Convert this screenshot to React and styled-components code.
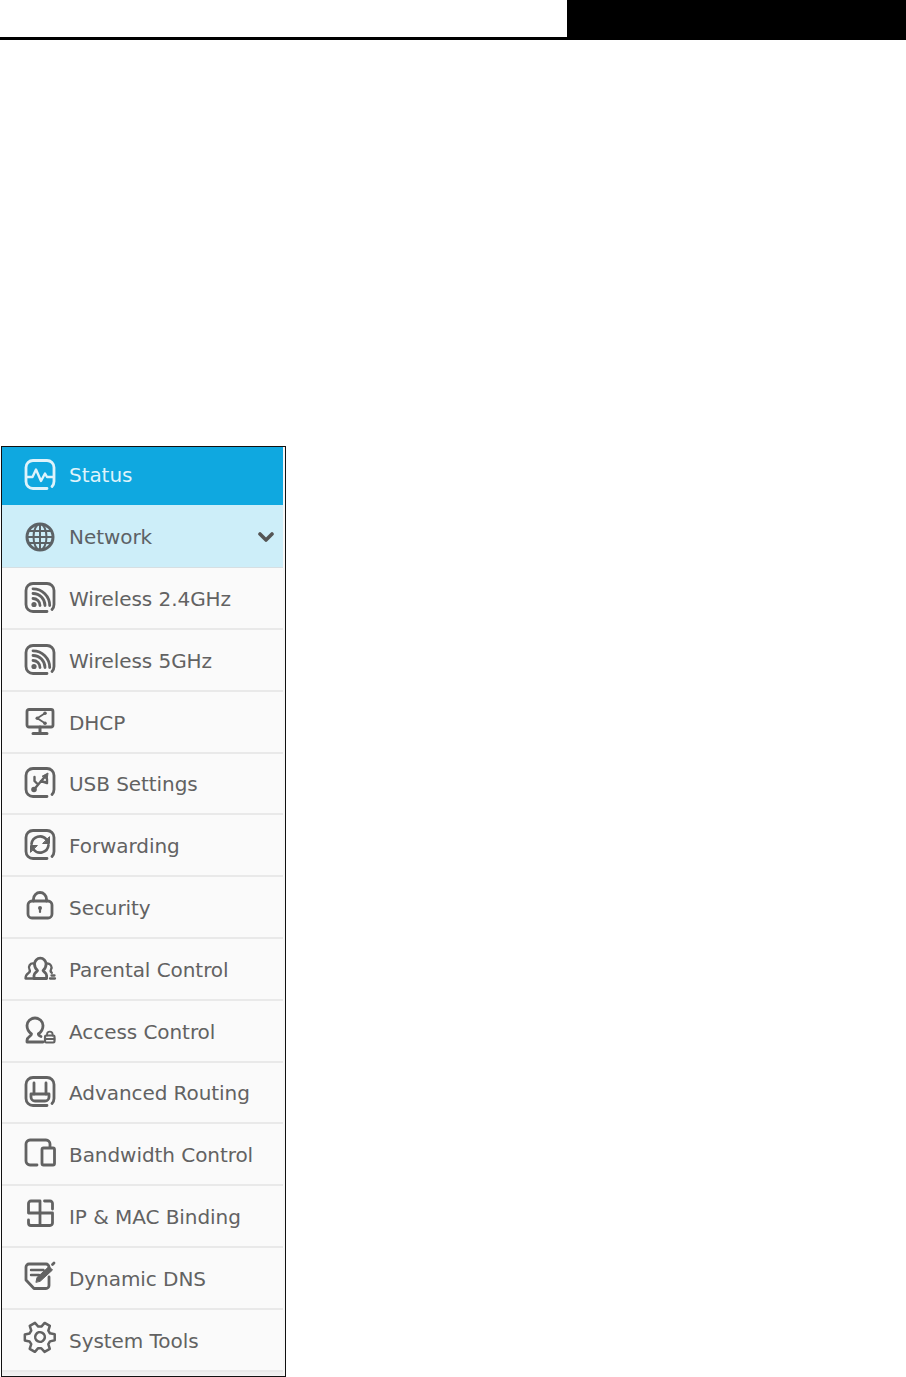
import React from "react"
import styled, { createGlobalStyle } from "styled-components"
import { ChevronDown } from "lucide-react"

const GREY = "#626262"

// rounded frame with the little gap at the lower right, shared by several icons
const Frame = () => (
  <path d="M23 29.500H9a7 7 0 0 1-7-7V8.500a7 7 0 0 1 7-7h14a7 7 0 0 1 7 7v14a7 7 0 0 1-2 4.900" />
)

const Dot = ({ x, y, r = 1.8 }) => <circle cx={x} cy={y} r={r} fill="currentColor" stroke="none" />

const icons = {
  status: (
    <>
      <Frame />
      <path d="M3 18h5.500l3.500-7.500 5 11.500 4-7.500 2 3.500h6" strokeWidth="2.400" />
    </>
  ),
  network: (
    <>
      <circle cx="16" cy="16" r="13" strokeWidth="3" />
      <ellipse cx="16" cy="16" rx="6.500" ry="13" strokeWidth="2" />
      <path d="M16 3v26M3 16h26M5 10h22M5 22h22" strokeWidth="2" />
    </>
  ),
  wifi: (
    <>
      <Frame />
      <Dot x={10} y={22.5} r={2.6} />
      <path d="M9 16.500A7 7 0 0 1 16 23.500M9 11.500A12 12 0 0 1 21 23.500M9 6.800A16.700 16.700 0 0 1 25.700 23.500" strokeWidth="2.800" />
    </>
  ),
  dhcp: (
    <>
      <rect x="3" y="3.500" width="26" height="17.500" rx="2" strokeWidth="2.800" />
      <path d="M16 21v6M9 27.500h14" strokeWidth="3" />
      <path d="M21 7.300l-7.700 5 7.700 5" strokeWidth="1.800" />
      <Dot x={21} y={7.3} />
      <Dot x={13.3} y={12.3} />
      <Dot x={21} y={17.3} />
    </>
  ),
  usb: (
    <>
      <Frame />
      <Dot x={10} y={22.5} r={2.8} />
      <path d="M10 22.500L21 9.500M14 17.500l-3.500-3.500v-4M17 14l6 2v-4" strokeWidth="2.400" />
      <path d="M18.500 9l5.500-3-.8 6z" fill="currentColor" strokeWidth="1" />
    </>
  ),
  forwarding: (
    <>
      <Frame />
      <path d="M7.500 15a8.500 8.500 0 0 1 15-4.500M24.500 16a8.500 8.500 0 0 1-15 4.500" strokeWidth="2.600" />
      <path d="M25.500 8v6.500h-6.500zM6.500 23v-6.500h6.500z" fill="currentColor" strokeWidth="1" />
    </>
  ),
  security: (
    <>
      <rect x="4" y="10" width="24" height="17" rx="4" />
      <path d="M9.500 10V8a6.500 6.500 0 0 1 13 0v2" />
      <Dot x={16} y={17} r={2} />
      <path d="M16 17v4" strokeWidth="2.200" />
    </>
  ),
  parental: (
    <>
      <path d="M10 25.500v-3c0-2.500 2.500-3 3.500-5-2-1.800-3-4-3-6.500a5.800 5.800 0 0 1 11.600 0c0 2.500-1 4.700-3 6.500 1 2 3.500 2.500 3.500 5v3z" />
      <path d="M9.500 10.500a4 4 0 0 0-4 6c.8 1.500.5 2.500-1 3.500-1.500 1-3 2-3 5.500H10M23.500 10.500a4 4 0 0 1 3.500 6c-.8 1.500-.4 2.500.8 3.300M26 25.500h5M27.500 22.500h3" strokeWidth="2.300" />
    </>
  ),
  access: (
    <>
      <path d="M14.500 19c3-2.200 4.500-5 4.500-8.500a8 7.500 0 0 0-16 0c0 3.500 1.500 6.300 4.500 8.500 0 2.500-4.500 2.500-4.500 6.500v1.500h16" />
      <path d="M14.500 19c0 1 .8 1.800 2.500 2.500" />
      <rect x="21" y="20.500" width="9.500" height="7" rx="1.200" strokeWidth="2.200" />
      <path d="M23 20.500v-1a2.800 2.800 0 0 1 5.600 0v1M21 24h9.500" strokeWidth="1.800" />
    </>
  ),
  routing: (
    <>
      <Frame />
      <path d="M10 7v11M22 7v11" />
      <path d="M7 18h18v3a4 4 0 0 1-4 4H11a4 4 0 0 1-4-4z" />
    </>
  ),
  bandwidth: (
    <>
      <path d="M13 27H6a4 4 0 0 1-4-4V6a4 4 0 0 1 4-4h16a4 4 0 0 1 4 4v3" />
      <rect x="18" y="10" width="12.500" height="17" rx="1.500" />
    </>
  ),
  binding: (
    <>
      <path d="M16 13H4.500V3.500A2.500 2.500 0 0 1 7 1h9zM16 13v12.500H7A2.500 2.500 0 0 1 4.500 23v-3M16 13h12.500V23a2.500 2.500 0 0 1-2.500 2.500H16M20.500 1H26a2.500 2.500 0 0 1 2.500 2.500V9" />
    </>
  ),
  ddns: (
    <>
      <path d="M25 7V5a3 3 0 0 0-3-3H5a3 3 0 0 0-3 3v13l8 8.500h12a3 3 0 0 0 3-3V15" />
      <path d="M7 8h12.500M7 13h8" strokeWidth="2.400" />
      <path d="M12 20l1-4.500L25 4.500l3.500 3.500L16.500 19z" fill="currentColor" strokeWidth="1" />
      <path d="M28.500 2.500l1.500-1.500" />
    </>
  ),
  tools: (
    <g transform="translate(0 -3) rotate(30 16 16)">
      <path d="M13 1.500h6l1 4.800 2.700 1.500 4.700-1.500 3 5.200-3.600 3.300v3.300l3.600 3.300-3 5.200-4.700-1.500-2.700 1.500-1 4.800h-6l-1-4.800-2.700-1.500-4.700 1.500-3-5.200 3.600-3.300v-3.300l-3.600-3.300 3-5.200 4.700 1.500 2.700-1.500z" strokeWidth="2.500" />
      <circle cx="16" cy="16" r="4.800" strokeWidth="2.600" />
    </g>
  ),
}

const items = [
  { label: "Status", icon: "status", kind: "active" },
  { label: "Network", icon: "network", kind: "open", arrow: true },
  { label: "Wireless 2.4GHz", icon: "wifi" },
  { label: "Wireless 5GHz", icon: "wifi" },
  { label: "DHCP", icon: "dhcp" },
  { label: "USB Settings", icon: "usb" },
  { label: "Forwarding", icon: "forwarding" },
  { label: "Security", icon: "security" },
  { label: "Parental Control", icon: "parental" },
  { label: "Access Control", icon: "access" },
  { label: "Advanced Routing", icon: "routing" },
  { label: "Bandwidth Control", icon: "bandwidth" },
  { label: "IP & MAC Binding", icon: "binding" },
  { label: "Dynamic DNS", icon: "ddns" },
  { label: "System Tools", icon: "tools" },
]

const App = () => (
  <>
    <GlobalStyle />
    <Header>
      <HeaderBlank />
      <HeaderBlock />
    </Header>
    <Menu>
      {items.map(item => (
        <Row key={item.label} $kind={item.kind}>
          <Icon viewBox="0 0 32 32">{icons[item.icon]}</Icon>
          <Label $kind={item.kind}>{item.label}</Label>
          {item.arrow && (
            <Arrow>
              <ChevronDown size={24} strokeWidth={3.6} />
            </Arrow>
          )}
        </Row>
      ))}
      <MenuEnd />
    </Menu>
  </>
)

export default App

const GlobalStyle = createGlobalStyle`
  html, body {
    margin: 0;
    padding: 0;
    background: #fff;
  }
  body {
    font-family: "DejaVu Sans", Verdana, sans-serif;
  }
`

const Header = styled.header`
  display: flex;
  height: 40px;
`

const HeaderBlank = styled.div`
  flex: 1;
  border-bottom: 3px solid #000;
`

const HeaderBlock = styled.div`
  width: 339px;
  background: #000;
`

const Menu = styled.nav`
  box-sizing: border-box;
  width: 285px;
  height: 931px;
  margin: 406px 0 0 1px;
  border: 1px solid #111;
  background: #f6f6f6;
  padding-right: 2px;
`

const rowColors = {
  active: "background: #0fa8e0; color: #def3fb; height: 58.4px; border-bottom: none; padding-bottom: 2px;",
  open: "background: #cdeef9; color: #5c6266; height: 62.8px; border-bottom: 1px solid #d6dfe3; padding-top: 2px;",
}

const Row = styled.div`
  box-sizing: border-box;
  display: flex;
  align-items: center;
  height: 61.8px;
  padding: 0 8px 0 22px;
  background: #fafafa;
  color: ${GREY};
  border-bottom: 2px solid #e9e9e9;
  ${({ $kind }) => rowColors[$kind] || ""}
`

const Icon = styled.svg`
  width: 32px;
  height: 32px;
  flex: none;
  overflow: visible;
  fill: none;
  stroke: currentColor;
  stroke-width: 2.800;
  stroke-linecap: round;
  stroke-linejoin: round;
  filter: blur(0.3px);
`

const Label = styled.span`
  margin-left: 13px;
  padding-top: ${({ $kind }) => ($kind ? "0" : "2px")};
  font-size: 20px;
  letter-spacing: -0.06px;
  white-space: nowrap;
  flex: 1;
`

const Arrow = styled.span`
  display: flex;
  margin-right: -3px;
  color: #555;
  filter: blur(0.3px);
`

const MenuEnd = styled.div`
  height: 3px;
  background: #efefef;
`
